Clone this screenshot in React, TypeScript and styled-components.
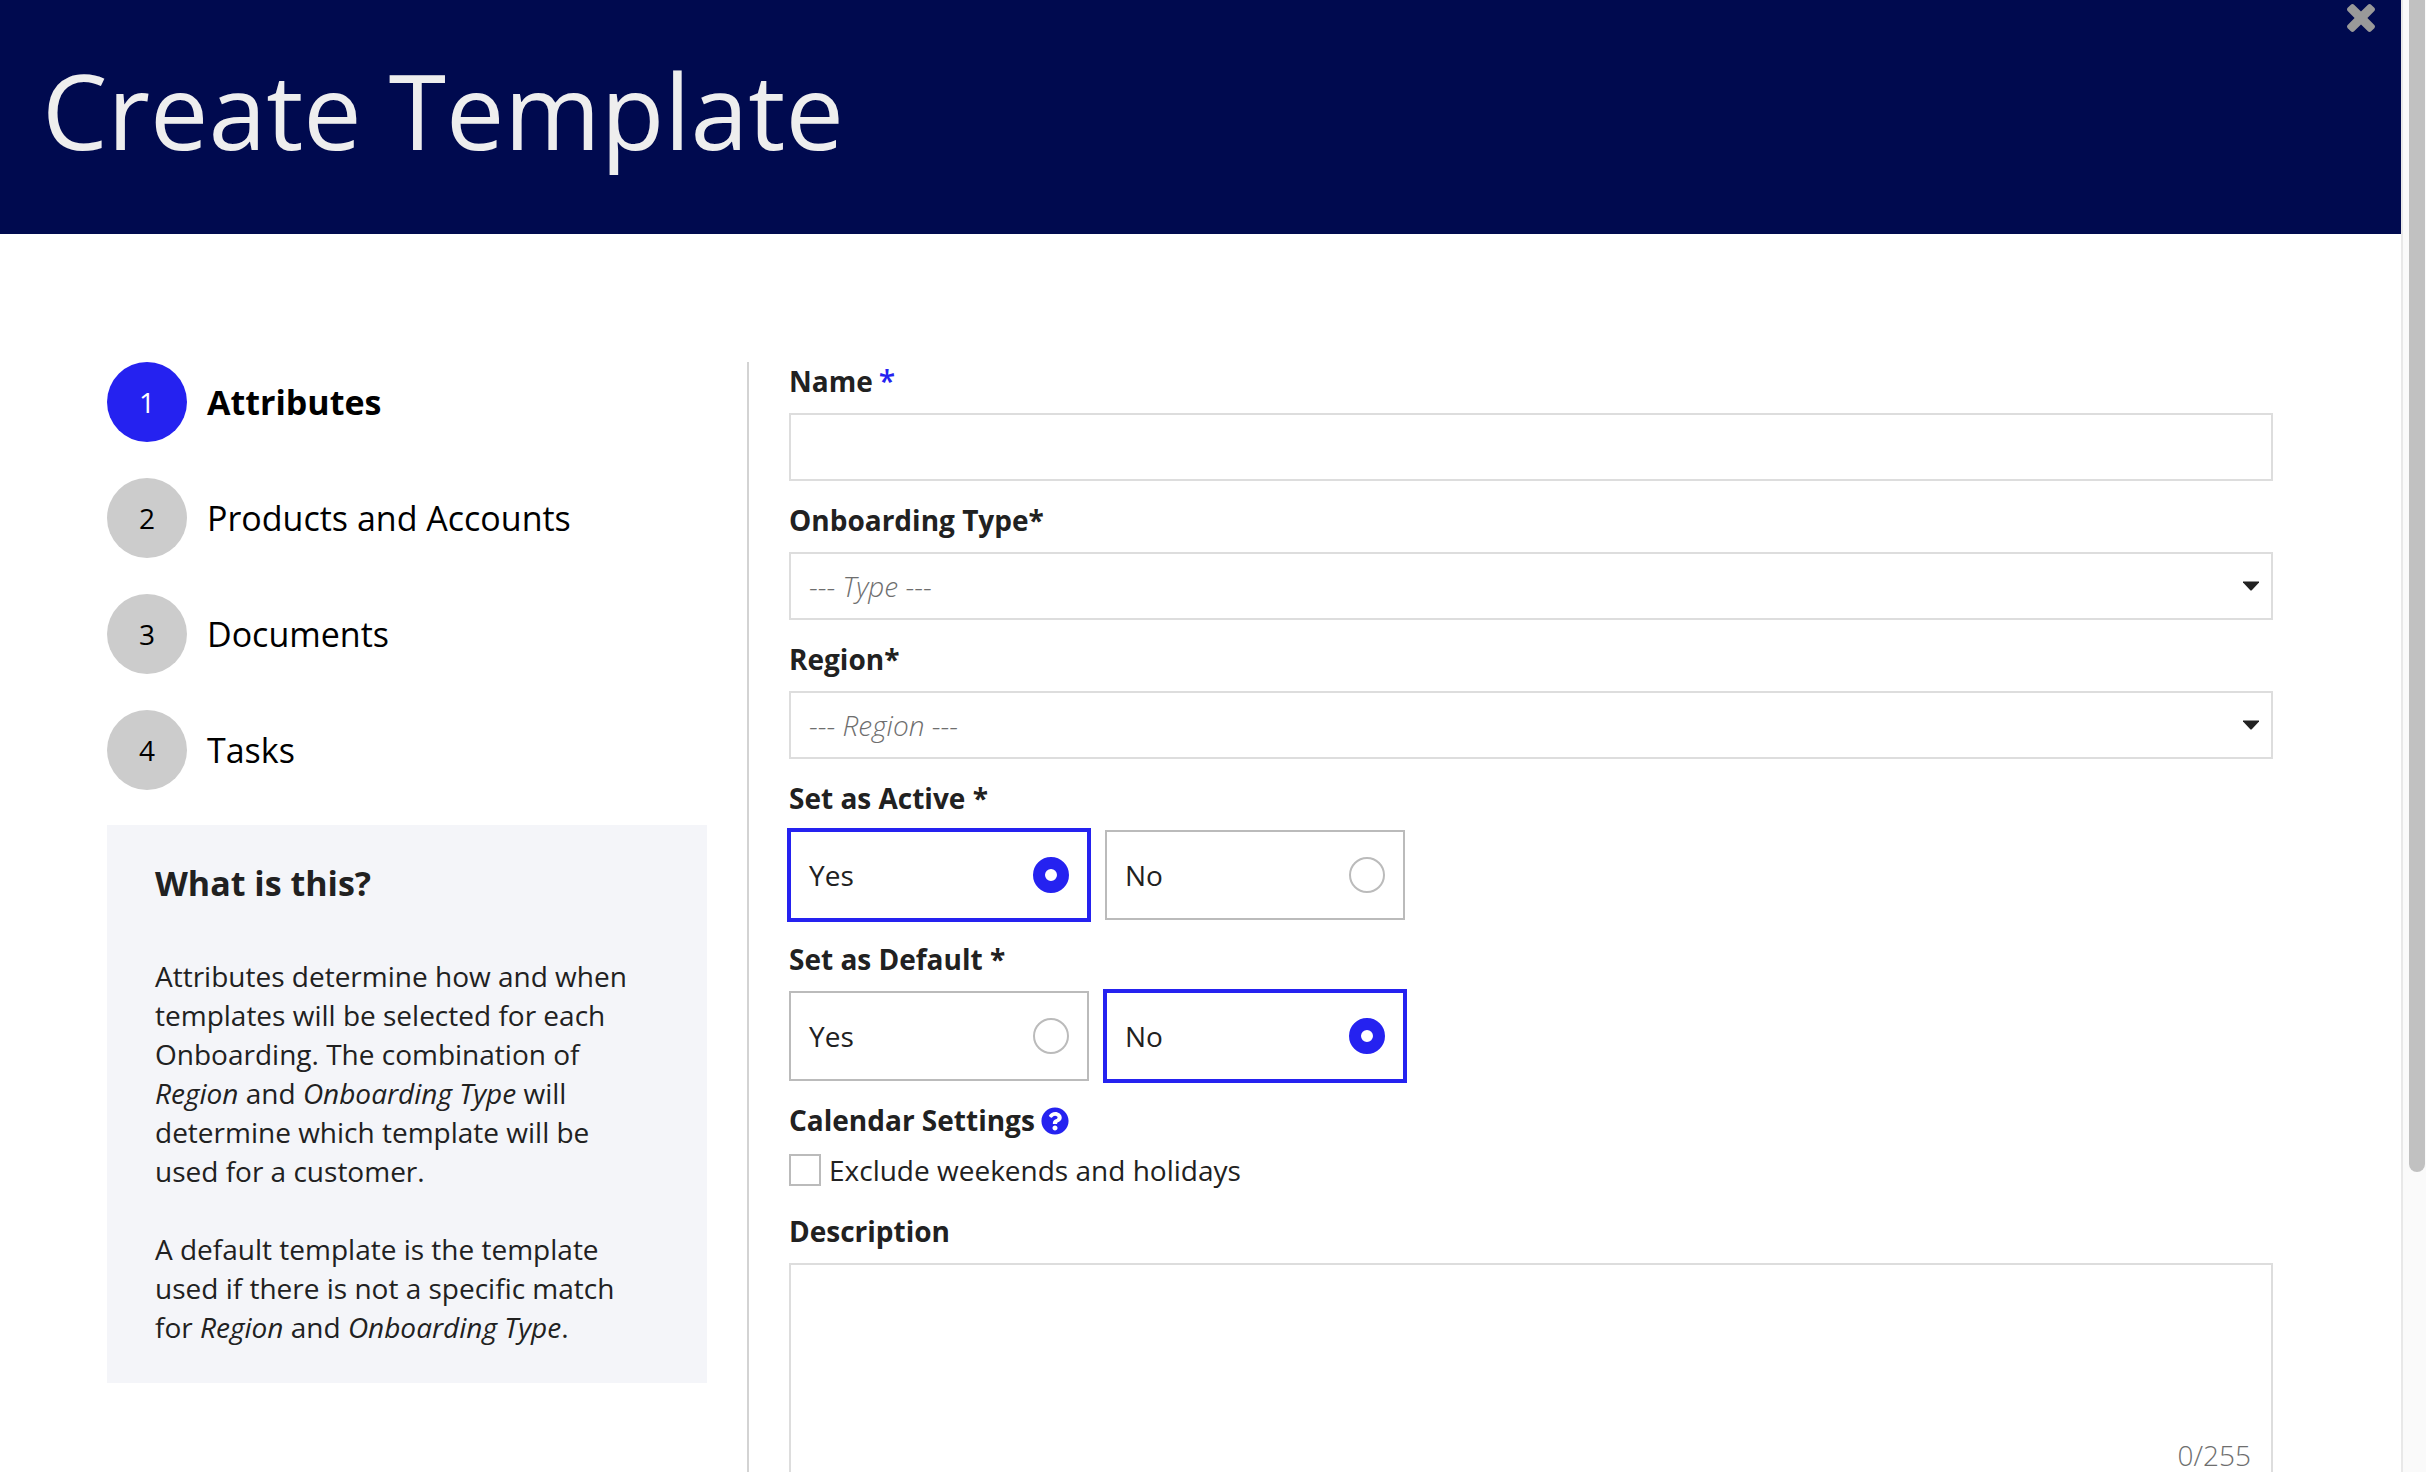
import React, { useEffect, useRef, useState } from "react";
import styled, { createGlobalStyle, css } from "styled-components";
import { FaQuestionCircle } from "react-icons/fa";

const color = {
  navy: "#000a4f",
  blue: "#2522f0",
  ink: "#212121",
  muted: "#6e6e6e",
  line: "#dddddd",
  control: "#bbbbbb",
  divider: "#d3d3d3",
  step: "#cccccc",
  panel: "#f4f5f9",
};

const GlobalStyle = createGlobalStyle`
  *, *::before, *::after { box-sizing: border-box; }
  body {
    margin: 0;
    background: #fff;
    color: ${color.ink};
    font: 400 28px/39px "Open Sans", "Noto Sans", sans-serif;
  }
  input, select, textarea, button { font: inherit; color: inherit; }
`;

const Shell = styled.div`
  display: flex;
  height: 100vh;
`;

const ScrollArea = styled.div`
  position: relative;
  flex: 1;
  min-width: 0;
  overflow-y: auto;
  scrollbar-width: none;
`;

const Track = styled.div`
  flex: none;
  width: 25px;
  padding: 0 1px 0 6px;
  border-left: 2px solid #e8e8e8;
  background: #fafafa;
  overflow: hidden;
`;

const Thumb = styled.div`
  width: 16px;
  border-radius: 0 0 8px 8px;
  background: #c1c1c1;
`;

const Header = styled.header`
  padding: 39px 42px 53px;
  background: ${color.navy};
`;

const Title = styled.h1`
  margin: 0;
  color: #eeeeee;
  font-size: 104px;
  line-height: 142px;
  font-weight: 400;
`;

const CloseButton = styled.button`
  position: absolute;
  top: 0;
  right: 22px;
  display: flex;
  padding: 4px;
  border: 0;
  background: none;
  color: #999999;
  cursor: pointer;
  svg { width: 28px; height: 28px; fill: currentColor; }
`;

const Body = styled.main`
  display: flex;
  gap: 40px;
  padding: 128px 128px 0 107px;
`;

const Sidebar = styled.aside`
  flex: none;
  width: 600px;
`;

const Steps = styled.ol`
  display: flex;
  flex-direction: column;
  gap: 36px;
  margin: 0 0 35px;
  padding: 0;
  list-style: none;
`;

const StepButton = styled.button<{ $current?: boolean }>`
  display: flex;
  align-items: center;
  gap: 20px;
  padding: 0;
  border: 0;
  background: none;
  color: #000;
  font-size: 34px;
  font-weight: ${(p) => (p.$current ? 700 : 400)};
  cursor: pointer;
`;

const StepNumber = styled.span<{ $current?: boolean }>`
  display: flex;
  align-items: center;
  justify-content: center;
  width: 80px;
  height: 80px;
  border-radius: 50%;
  background: ${(p) => (p.$current ? color.blue : color.step)};
  color: ${(p) => (p.$current ? "#fff" : "#000")};
  font-size: 28px;
  font-weight: 400;
`;

const Help = styled.section`
  padding: 36px 48px;
  background: ${color.panel};
`;

const HelpTitle = styled.h2`
  margin: 0 0 51px;
  font-size: 34px;
  line-height: 45px;
  font-weight: 700;
`;

const HelpText = styled.p`
  margin: 0;
  & + & { margin-top: 39px; }
`;

const Form = styled.form`
  display: flex;
  flex: 1;
  flex-direction: column;
  gap: 20px;
  min-width: 0;
  padding: 0 0 366px 40px;
  border-left: 2px solid ${color.divider};
`;

const Field = styled.div`
  display: flex;
  flex-direction: column;
  gap: 12px;
`;

const labelText = css`
  font-weight: 700;
  line-height: 39px;
`;

const Label = styled.label`
  ${labelText}
`;

const Required = styled.span`
  margin-left: 6px;
  color: ${color.blue};
  font-size: 30px;
  line-height: 1;
  font-weight: 600;
`;

const controlBox = css`
  width: 100%;
  margin: 0;
  border: 2px solid ${color.line};
  border-radius: 0;
  background: #fff;
`;

const TextInput = styled.input`
  ${controlBox}
  height: 68px;
  padding: 0 18px;
`;

const SelectWrap = styled.div`
  position: relative;
`;

const Select = styled.select`
  ${controlBox}
  display: block;
  height: 68px;
  padding: 0 48px 0 18px;
  appearance: none;
  color: ${color.muted};
  font-style: italic;
  font-weight: 300;
`;

const Caret = styled.svg`
  position: absolute;
  top: 29px;
  right: 14px;
  width: 16px;
  height: 10px;
  fill: ${color.ink};
  pointer-events: none;
`;

const Group = styled.fieldset`
  min-width: 0;
  margin: 0;
  padding: 0;
  border: 0;
`;

const Legend = styled.legend<{ $gap: number }>`
  ${labelText}
  display: flex;
  align-items: center;
  gap: 6px;
  padding: 0;
  margin-bottom: ${(p) => p.$gap}px;
`;

const Options = styled.div`
  display: flex;
  gap: 16px;
`;

const Option = styled.label<{ $checked: boolean }>`
  display: flex;
  align-items: center;
  justify-content: space-between;
  width: 300px;
  height: 90px;
  padding: 0 18px;
  border: 2px solid ${(p) => (p.$checked ? color.blue : color.control)};
  box-shadow: ${(p) => (p.$checked ? `0 0 0 2px ${color.blue}` : "none")};
  cursor: pointer;
`;

const Radio = styled.input`
  appearance: none;
  width: 36px;
  height: 36px;
  margin: 0;
  border: 2px solid ${color.control};
  border-radius: 50%;
  background: #fff;
  &:checked { border: 12px solid ${color.blue}; }
`;

const CheckRow = styled.label`
  display: flex;
  align-items: center;
  gap: 8px;
  height: 44px;
`;

const Checkbox = styled.input`
  appearance: none;
  width: 32px;
  height: 32px;
  margin: 0;
  border: 2px solid ${color.control};
  background: #fff;
  &:checked { background: ${color.blue}; }
`;

const HelpButton = styled.button`
  display: flex;
  padding: 0;
  border: 0;
  background: none;
  color: ${color.blue};
  cursor: pointer;
  svg { width: 28px; height: 28px; }
`;

const TextAreaWrap = styled.div`
  position: relative;
`;

const TextArea = styled.textarea`
  ${controlBox}
  display: block;
  height: 220px;
  padding: 12px 18px 48px;
  resize: none;
`;

const Counter = styled.span`
  position: absolute;
  right: 22px;
  bottom: 14px;
  color: ${color.muted};
  line-height: 28px;
  font-weight: 300;
`;

const steps = ["Attributes", "Products and Accounts", "Documents", "Tasks"];

function CloseIcon() {
  return (
    <svg viewBox="302 366 1188 1188" aria-hidden="true">
      <path d="M1490 1322q0 40-28 68l-136 136q-28 28-68 28t-68-28l-294-294-294 294q-28 28-68 28t-68-28l-136-136q-28-28-28-68t28-68l294-294-294-294q-28-28-28-68t28-68l136-136q28-28 68-28t68 28l294 294 294-294q28-28 68-28t68 28l136 136q28 28 28 68t-28 68l-294 294 294 294q28 28 28 68z" />
    </svg>
  );
}

function SelectField({ id, label, placeholder }: { id: string; label: string; placeholder: string }) {
  return (
    <Field>
      <Label htmlFor={id}>{label}</Label>
      <SelectWrap>
        <Select id={id} defaultValue="">
          <option value="">{placeholder}</option>
        </Select>
        <Caret viewBox="0 0 16 10" aria-hidden="true">
          <path d="M0 0.5h16v1L8.5 9.5h-1L0 1.5z" />
        </Caret>
      </SelectWrap>
    </Field>
  );
}

function YesNoField({ name, label, initial }: { name: string; label: string; initial: string }) {
  const [value, setValue] = useState(initial);
  return (
    <Group>
      <Legend $gap={12}>{label}</Legend>
      <Options>
        {["Yes", "No"].map((option) => (
          <Option key={option} $checked={value === option}>
            {option}
            <Radio
              type="radio"
              name={name}
              value={option}
              checked={value === option}
              onChange={() => setValue(option)}
            />
          </Option>
        ))}
      </Options>
    </Group>
  );
}

export default function App() {
  const area = useRef<HTMLDivElement>(null);
  const [thumb, setThumb] = useState({ size: 100, offset: 0 });
  const [description, setDescription] = useState("");

  const measure = () => {
    const el = area.current;
    if (!el) return;
    setThumb({
      size: (el.clientHeight / el.scrollHeight) * 100,
      offset: (el.scrollTop / el.scrollHeight) * el.clientHeight,
    });
  };

  useEffect(() => {
    measure();
    window.addEventListener("resize", measure);
    return () => window.removeEventListener("resize", measure);
  }, []);

  return (
    <Shell>
      <GlobalStyle />
      <ScrollArea ref={area} onScroll={measure}>
        <Header>
          <Title>Create Template</Title>
          <CloseButton type="button" aria-label="Close">
            <CloseIcon />
          </CloseButton>
        </Header>
        <Body>
          <Sidebar>
            <Steps>
              {steps.map((step, i) => (
                <li key={step}>
                  <StepButton type="button" $current={i === 0}>
                    <StepNumber $current={i === 0}>{i + 1}</StepNumber>
                    {step}
                  </StepButton>
                </li>
              ))}
            </Steps>
            <Help>
              <HelpTitle>What is this?</HelpTitle>
              <HelpText>
                Attributes determine how and when templates will be selected for each Onboarding. The
                combination of <em>Region</em> and <em>Onboarding Type</em> will determine which
                template will be used for a customer.
              </HelpText>
              <HelpText>
                A default template is the template used if there is not a specific match for{" "}
                <em>Region</em> and <em>Onboarding Type</em>.
              </HelpText>
            </Help>
          </Sidebar>
          <Form>
            <Field>
              <Label htmlFor="name">
                Name<Required>*</Required>
              </Label>
              <TextInput id="name" type="text" />
            </Field>
            <SelectField id="type" label="Onboarding Type*" placeholder="--- Type ---" />
            <SelectField id="region" label="Region*" placeholder="--- Region ---" />
            <YesNoField name="active" label="Set as Active *" initial="Yes" />
            <YesNoField name="default" label="Set as Default *" initial="No" />
            <Group>
              <Legend $gap={8}>
                Calendar Settings
                <HelpButton type="button" aria-label="About calendar settings">
                  <FaQuestionCircle />
                </HelpButton>
              </Legend>
              <CheckRow>
                <Checkbox type="checkbox" />
                Exclude weekends and holidays
              </CheckRow>
            </Group>
            <Field>
              <Label htmlFor="description">Description</Label>
              <TextAreaWrap>
                <TextArea
                  id="description"
                  maxLength={255}
                  value={description}
                  onChange={(e) => setDescription(e.target.value)}
                />
                <Counter>{description.length}/255</Counter>
              </TextAreaWrap>
            </Field>
          </Form>
        </Body>
      </ScrollArea>
      <Track>
        <Thumb style={{ height: `${thumb.size}%`, marginTop: thumb.offset }} />
      </Track>
    </Shell>
  );
}
